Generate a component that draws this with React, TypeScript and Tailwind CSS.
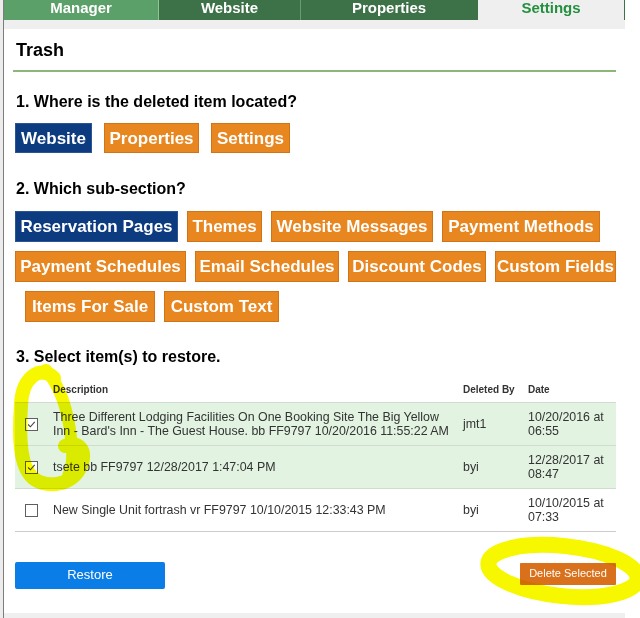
import React from 'react';

const tabs = [
  { label: 'Manager', cls: 'w-[155px] bg-[#5b9f69] text-white border-r border-[#8cc596]' },
  { label: 'Website', cls: 'w-[142px] bg-[#3d7148] text-white border-r border-[#6b9a72]' },
  { label: 'Properties', cls: 'w-[176px] bg-[#3d7148] text-white' },
  { label: 'Settings', cls: 'w-[148px] bg-[#efefef] text-[#24903f] border-x border-[#3d7148]' },
];

type Btn = { label: string; w: string; active?: boolean };

const locations: Btn[] = [
  { label: 'Website', w: 'w-[77px]', active: true },
  { label: 'Properties', w: 'w-[95px]' },
  { label: 'Settings', w: 'w-[79px]' },
];

const sectionRows: Btn[][] = [
  [
    { label: 'Reservation Pages', w: 'w-[163px]', active: true },
    { label: 'Themes', w: 'w-[75px]' },
    { label: 'Website Messages', w: 'w-[162px]' },
    { label: 'Payment Methods', w: 'w-[158px]' },
  ],
  [
    { label: 'Payment Schedules', w: 'w-[171px]' },
    { label: 'Email Schedules', w: 'w-[144px]' },
    { label: 'Discount Codes', w: 'w-[138px]' },
    { label: 'Custom Fields', w: 'w-[121px]' },
  ],
  [
    { label: 'Items For Sale', w: 'w-[130px]' },
    { label: 'Custom Text', w: 'w-[115px]' },
  ],
];

const items = [
  {
    checked: true,
    green: true,
    desc: 'Three Different Lodging Facilities On One Booking Site The Big Yellow Inn - Bard\'s Inn - The Guest House. bb FF9797 10/20/2016 11:55:22 AM',
    by: 'jmt1',
    date: '10/20/2016 at 06:55',
  },
  { checked: true, green: true, desc: 'tsete bb FF9797 12/28/2017 1:47:04 PM', by: 'byi', date: '12/28/2017 at 08:47' },
  { checked: false, green: false, desc: 'New Single Unit fortrash vr FF9797 10/10/2015 12:33:43 PM', by: 'byi', date: '10/10/2015 at 07:33' },
];

function PickButton({ b, h }: { b: Btn; h: string }) {
  return (
    <button
      className={`${b.w} ${h} shrink-0 whitespace-nowrap text-center text-[17px] font-bold leading-none text-white ${
        b.active ? 'border border-[#2a5594] bg-[#0d3b80]' : 'border border-[#cf7419] bg-[#e8861f]'
      }`}
    >
      {b.label}
    </button>
  );
}

function Check({ checked }: { checked: boolean }) {
  return (
    <span className="inline-flex h-[13px] w-[13px] items-center justify-center border border-[#5f5f5f] bg-white align-middle">
      {checked && (
        <svg viewBox="0 0 13 13" className="h-[11px] w-[11px]">
          <path d="M2.5 6.5 L5.2 9.2 L10.3 3.3" fill="none" stroke="#444" strokeWidth="1.3" />
        </svg>
      )}
    </span>
  );
}

export default function App() {
  return (
    <div className="relative flex h-[618px] w-[640px] overflow-hidden bg-white font-['Liberation_Sans',Arial,sans-serif] text-[#111]">
      <div className="w-[3px] shrink-0 bg-[#ececec]" />
      <div className="w-[1px] shrink-0 bg-[#7d7d7d]" />

      <div className="flex w-[621px] shrink-0 flex-col">
        {/* tabs */}
        <div className="flex h-[20px]">
          {tabs.map((t) => (
            <div key={t.label} className={`${t.cls} text-center text-[15px] font-bold leading-[15px]`}>
              {t.label}
            </div>
          ))}
        </div>
        <div className="h-[9px] bg-[#efefef]" />

        <div className="flex flex-1 flex-col px-[9px]">
          <div className="mt-[11px] pl-[3px] text-[18px] font-bold leading-[20px] text-black">Trash</div>
          <div className="mt-[10px] h-[2px] bg-[#8db67b]" />

          <div className="mt-[20px] pl-[3px] text-[16px] font-bold leading-[20px] text-black">
            1. Where is the deleted item located?
          </div>
          <div className="mt-[11px] flex gap-[12px] pl-[2px]">
            {locations.map((b) => (
              <PickButton key={b.label} b={b} h="h-[30px]" />
            ))}
          </div>

          <div className="mt-[26px] pl-[3px] text-[16px] font-bold leading-[20px] text-black">2. Which sub-section?</div>
          <div className="mt-[12px] flex flex-col gap-[9px] pl-[2px]">
            {sectionRows.map((row, i) => (
              <div key={i} className={`flex gap-[9px] ${i === 2 ? 'pl-[10px]' : ''}`}>
                {row.map((b) => (
                  <PickButton key={b.label} b={b} h="h-[31px]" />
                ))}
              </div>
            ))}
          </div>

          <div className="mt-[25px] pl-[3px] text-[16px] font-bold leading-[20px] text-black">
            3. Select item(s) to restore.
          </div>

          <table className="ml-[2px] mt-[11px] w-[601px] table-fixed border-collapse text-[#333]">
            <colgroup>
              <col className="w-[30px]" />
              <col className="w-[410px]" />
              <col className="w-[65px]" />
              <col className="w-[96px]" />
            </colgroup>
            <thead>
              <tr className="h-[24px] text-left text-[10px] font-bold">
                <th />
                <th className="pl-[8px]">Description</th>
                <th className="pl-[8px]">Deleted By</th>
                <th className="pl-[8px]">Date</th>
              </tr>
            </thead>
            <tbody className="text-[12.4px] leading-[14px]">
              {items.map((it, i) => (
                <tr
                  key={i}
                  className={`h-[43px] border-t border-[#cfdccf] ${it.green ? 'bg-[#e2f3e2]' : 'bg-white'} ${
                    i === items.length - 1 ? 'border-b border-b-[#cccccc]' : ''
                  }`}
                >
                  <td className="pl-[10px] align-middle">
                    <Check checked={it.checked} />
                  </td>
                  <td className="pl-[8px] pr-[3px] align-middle">{it.desc}</td>
                  <td className="pl-[8px] align-middle">{it.by}</td>
                  <td className="pl-[8px] align-middle">{it.date}</td>
                </tr>
              ))}
            </tbody>
          </table>

          <div className="ml-[2px] mt-[30px] flex w-[601px] items-start justify-between">
            <button className="h-[27px] w-[150px] rounded-[2px] bg-[#0b7de6] text-[13px] text-white">Restore</button>
            <button className="mt-[1px] h-[22px] w-[96px] rounded-[1px] bg-[#d9701c] text-[11px] text-white">
              Delete Selected
            </button>
          </div>
        </div>

        <div className="h-[5px] bg-[#efefef]" />
      </div>

      {/* highlighter marks drawn over the screenshot */}
      <svg className="pointer-events-none absolute inset-0 mix-blend-multiply" width="640" height="618">
        <path
          d="M54 378 C40 364 22 378 21 405 C19 435 19 466 33 478 C48 490 74 484 81 466 C87 450 79 440 65 446"
          stroke="#f7f700"
          strokeWidth="14"
          fill="none"
          strokeLinecap="round"
        />
        <path
          d="M46 370 C60 386 68 410 71 438 C73 455 73 466 68 476"
          stroke="#f7f700"
          strokeWidth="12"
          fill="none"
          strokeLinecap="round"
        />
        <ellipse
          cx="563"
          cy="571"
          rx="75"
          ry="25"
          transform="rotate(6 563 571)"
          stroke="#f7f700"
          strokeWidth="16"
          fill="none"
        />
      </svg>
    </div>
  );
}
